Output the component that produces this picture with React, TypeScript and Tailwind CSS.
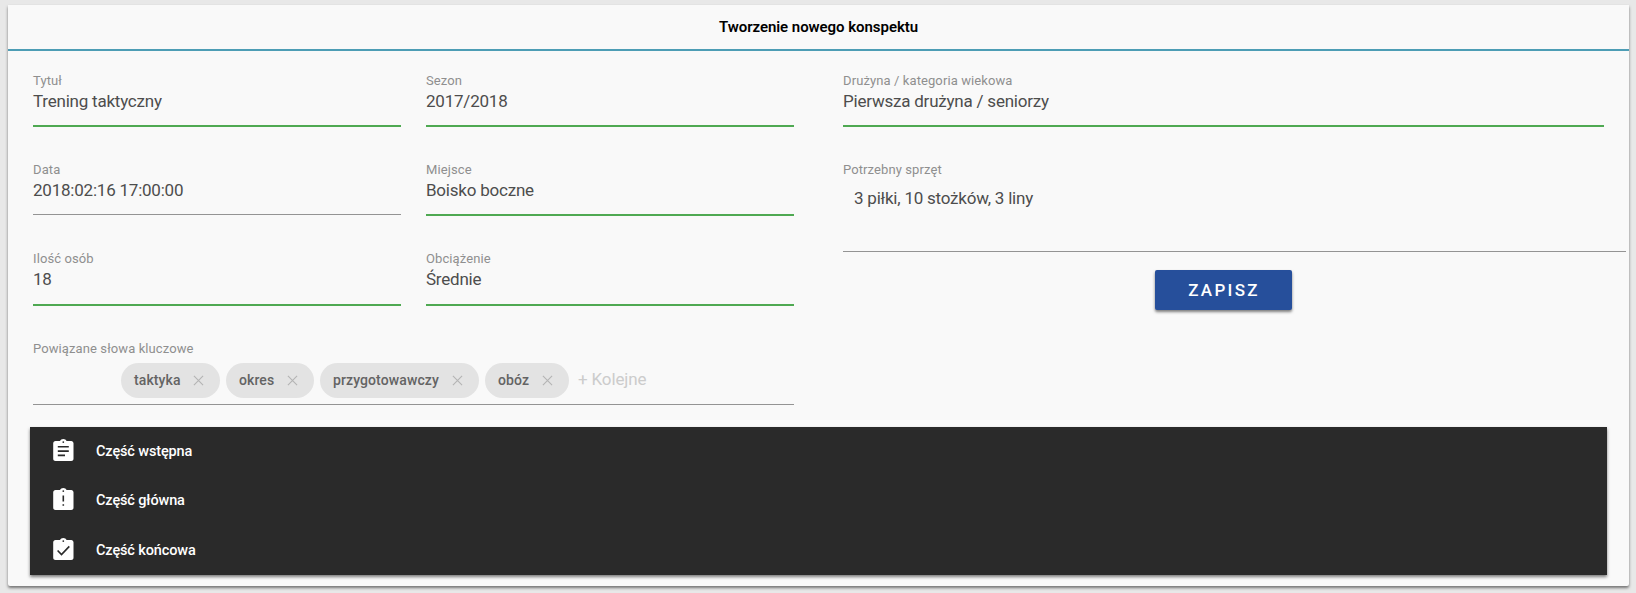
import type { ReactNode } from 'react';

const GREEN = 'border-b-2 border-[#4fa952]';
const GREY = 'border-b border-[#949494]';

function Field({ label, value, line = GREEN, valueClass = 'h-[35px]' }: {
  label: string;
  value: string;
  line?: string;
  valueClass?: string;
}) {
  return (
    <div>
      <div className="h-5 text-[13px] leading-[22px] tracking-[0.1px] text-[#8f8f8f]">{label}</div>
      <div className={`text-[17px] leading-[23px] tracking-[-0.22px] text-[#4d4d4d] ${valueClass} box-content ${line}`}>{value}</div>
    </div>
  );
}

function Chip({ children, width }: { children: string; width: string }) {
  return (
    <div className={`flex h-[35px] items-center justify-between rounded-full bg-[#e3e3e3] pr-4 pl-[13px] text-[14px] font-medium tracking-[0.1px] text-[#646464] ${width}`}>
      <span>{children}</span>
      <svg width="11" height="11" viewBox="0 0 12 12" fill="none" stroke="#b4b4b4" strokeWidth="1.2">
        <path d="M1 1l10 10M11 1L1 11" />
      </svg>
    </div>
  );
}

function Clipboard({ children }: { children: ReactNode }) {
  return (
    <svg width="21" height="22" viewBox="0 0 21 22" fill="none" stroke="#2a2a2a" strokeWidth="1.6">
      <path d="M2.5 2H7C7.5.7 8.8 0 10.3 0s2.8.7 3.3 2h4.6c1.3 0 2.3 1 2.3 2.300v15.400c0 1.300-1 2.300-2.300 2.300h-15.700c-1.300 0-2.300-1-2.300-2.300V4.300C.2 3 1.200 2 2.500 2z" fill="#fff" stroke="none" />
      <circle cx="10.300" cy="3.100" r="0.900" fill="#2a2a2a" stroke="none" />
      {children}
    </svg>
  );
}

function Section({ icon, children }: { icon: ReactNode; children: string }) {
  return (
    <div className="flex h-[49px] items-center pl-[23px] text-[14.5px] font-medium tracking-[-0.13px] text-white last:h-[51px]">
      <span className="pb-[3px]"><Clipboard>{icon}</Clipboard></span>
      <span className="ml-[22px]">{children}</span>
    </div>
  );
}

export default function App() {
  return (
    <div className="h-[593px] w-[1636px] bg-[#e8e8e8] pt-[5px] pl-2 font-['Roboto',sans-serif]">
      <main className="flex h-[581px] w-[1621px] flex-col rounded-b-xs bg-[#f9f9f9] shadow-[0_2px_3px_rgba(0,0,0,0.5)]">
        <header className="h-[46px] border-b-2 border-[#4d9db5] text-center text-[15px] leading-[45px] font-semibold tracking-[-0.05px] text-black">
          Tworzenie nowego konspektu
        </header>
        <div className="flex h-[376px] pt-[19px] pl-[25px]">
          <div className="w-[761px]">
            <div className="grid grid-cols-[368px_368px] grid-rows-[89px_89px_90px] gap-x-[25px]">
              <Field label="Tytuł" value="Trening taktyczny" />
              <Field label="Sezon" value="2017/2018" />
              <Field label="Data" value="2018:02:16 17:00:00" line={GREY} />
              <Field label="Miejsce" value="Boisko boczne" />
              <Field label="Ilość osób" value="18" valueClass="h-[36px]" />
              <Field label="Obciążenie" value="Średnie" valueClass="h-[36px]" />
            </div>
            <div className="h-[25px] text-[13px] leading-[22px] tracking-[0.1px] text-[#8f8f8f]">Powiązane słowa kluczowe</div>
            <div className={`box-content flex h-[41px] gap-1.5 pl-[88px] ${GREY}`}>
              <Chip width="w-[99px]">taktyka</Chip>
              <Chip width="w-[88px]">okres</Chip>
              <Chip width="w-[159px]">przygotowawczy</Chip>
              <Chip width="w-[84px]">obóz</Chip>
              <span className="ml-[3px] text-[17px] leading-[33px] tracking-[-0.15px] text-[#cccccc]">+ Kolejne</span>
            </div>
          </div>
          <div className="ml-[49px] w-[783px]">
            <div className="h-[89px] w-[761px]">
              <Field label="Drużyna / kategoria wiekowa" value="Pierwsza drużyna / seniorzy" />
            </div>
            <Field label="Potrzebny sprzęt" value="3 piłki, 10 stożków, 3 liny" line={GREY} valueClass="h-[64px] pt-2 pl-[11px]" />
            <button className="mt-[18px] ml-[312px] block h-10 w-[137px] rounded-xs bg-[#264f9b] pt-0.5 pl-px text-[17px] font-medium tracking-[2.3px] text-white shadow-[0_2px_3px_rgba(0,0,0,0.5)]">
              ZAPISZ
            </button>
          </div>
        </div>
        <section className="ml-[22px] h-[148px] w-[1577px] bg-[#2a2a2a] shadow-[0_2px_3px_rgba(0,0,0,0.5)]">
          <Section icon={<path d="M4.800 7.700h11M4.800 12.100h11M4.800 16.400h7.200" />}>Część wstępna</Section>
          <Section icon={<path d="M10.300 7.500v6M10.300 16.200v1.600" />}>Część główna</Section>
          <Section icon={<path d="M4.600 12.500l3.900 4 7.800-8.100" />}>Część końcowa</Section>
        </section>
      </main>
    </div>
  );
}
